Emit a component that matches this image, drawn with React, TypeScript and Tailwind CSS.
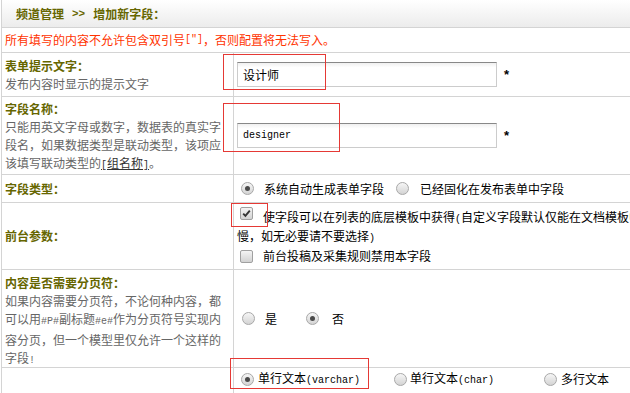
import React from "react";

const Radio = ({ checked }: { checked?: boolean }) => (
  <span className="flex items-center justify-center w-[13px] h-[13px] rounded-full border border-[#a8a8a8] bg-gradient-to-b from-[#f6f6f6] to-[#d4d4d4] shrink-0">
    {checked && <span className="w-[5px] h-[5px] rounded-full bg-[#4a4a4a]" />}
  </span>
);

const Check = ({ checked }: { checked?: boolean }) => (
  <span className="flex items-center justify-center w-[13px] h-[13px] rounded-[2px] border border-[#a0a0a0] bg-gradient-to-b from-[#f4f4f4] to-[#d2d2d2] shrink-0">
    {checked && (
      <svg width="9" height="9" viewBox="0 0 9 9">
        <path d="M1.2 4.6 L3.4 6.9 L7.8 1.6" stroke="#333" strokeWidth="1.9" fill="none" />
      </svg>
    )}
  </span>
);

const M = ({ children }: { children: React.ReactNode }) => (
  <span className="font-['Liberation_Mono',monospace] text-[10px]">{children}</span>
);

const Label = ({ children }: { children: React.ReactNode }) => (
  <div className="font-bold text-[#666600]">{children}</div>
);

const Input = ({ value, mono }: { value: string; mono?: boolean }) => (
  <div className="flex items-center w-[260px] h-[25px] border border-[#cccccc] border-t-[#888888] bg-gradient-to-b from-[#f0f0f0] to-white to-[20%] pl-[5px]">
    <span className={mono ? "font-['Liberation_Mono',monospace] text-[10px]" : "text-[12px]"}>{value}</span>
  </div>
);

export default function App() {
  const line = "border-[#d4d4d4]";
  return (
    <div className="relative w-[630px] h-[393px] overflow-hidden bg-white text-[12px] leading-[18px] text-black font-['Noto_Sans_CJK_SC',sans-serif]">
      <div className={`ml-px w-[900px] border-l ${line}`}>
        {/* header */}
        <div className={`h-[28px] border-b ${line} bg-gradient-to-b from-white to-[#ececec] flex items-center pl-[14px] font-bold text-[#666600]`}>
          <span>频道管理</span>
          <span className="font-['Liberation_Mono',monospace] text-[11px] mx-[8px]">&gt;&gt;</span>
          <span>增加新字段：</span>
        </div>
        {/* notice */}
        <div className={`h-[25px] border-b ${line} flex items-center pl-[3px] text-[#ff3300]`}>
          所有填写的内容不允许包含双引号<M>[&quot;]</M>，否则配置将无法写入。
        </div>
        {/* row 1 */}
        <div className={`flex h-[44px] border-b ${line}`}>
          <div className={`w-[232px] shrink-0 border-r ${line} pl-[3px] pt-[4px]`}>
            <Label>表单提示文字：</Label>
            <div className="text-[#666666]">发布内容时显示的提示文字</div>
          </div>
          <div className="flex items-center pl-[3px]">
            <Input value="设计师" />
            <span className="ml-[7px] font-['Liberation_Sans',sans-serif] font-bold text-[13px]">*</span>
          </div>
        </div>
        {/* row 2 */}
        <div className={`flex h-[78px] border-b ${line}`}>
          <div className={`w-[232px] shrink-0 border-r ${line} pl-[3px] pt-[3px]`}>
            <Label>字段名称：</Label>
            <div className="text-[#666666]">
              只能用英文字母或数字，数据表的真实字
              <br />
              段名，如果数据类型是联动类型，该项应
              <br />
              该填写联动类型的
              <span className="underline text-[#333333]">
                <M>[</M>组名称<M>]</M>
              </span>
              。
            </div>
          </div>
          <div className="flex items-center pl-[3px]">
            <Input value="designer" mono />
            <span className="ml-[7px] font-['Liberation_Sans',sans-serif] font-bold text-[13px]">*</span>
          </div>
        </div>
        {/* row 3 */}
        <div className={`flex h-[28px] border-b ${line}`}>
          <div className={`w-[232px] shrink-0 border-r ${line} pl-[3px] flex items-center`}>
            <Label>字段类型：</Label>
          </div>
          <div className="flex items-center pl-[7px]">
            <Radio checked />
            <span className="ml-[10px]">系统自动生成表单字段</span>
            <span className="ml-[12px]">
              <Radio />
            </span>
            <span className="ml-[11px]">已经固化在发布表单中字段</span>
          </div>
        </div>
        {/* row 4 */}
        <div className={`flex h-[67px] border-b ${line}`}>
          <div className={`w-[232px] shrink-0 border-r ${line} pl-[3px] flex items-center`}>
            <Label>前台参数：</Label>
          </div>
          <div className="pl-[3px] pt-[4px] whitespace-nowrap">
            <div className="flex items-start h-[20px]">
              <span className="ml-[3px] mt-0">
                <Check checked />
              </span>
              <span className="ml-[10px] leading-[20px]">
                使字段可以在列表的底层模板中获得<M>(</M>自定义字段默认仅能在文档模板中获得，选择此项会使列表速度变
              </span>
            </div>
            <div className="leading-[18px]">
              慢，如无必要请不要选择<M>)</M>
            </div>
            <div className="flex items-center h-[16px]">
              <span className="ml-[3px]">
                <Check />
              </span>
              <span className="ml-[10px]">前台投稿及采集规则禁用本字段</span>
            </div>
          </div>
        </div>
        {/* row 5 */}
        <div className={`flex h-[98px] border-b ${line}`}>
          <div className={`w-[232px] shrink-0 border-r ${line} pl-[3px] pt-[4px]`}>
            <Label>内容是否需要分页符：</Label>
            <div className="text-[#666666]">
              如果内容需要分页符，不论何种内容，都
              <br />
              可以用<M>#P#</M>副标题<M>#e#</M>作为分页符号实现内
              <br />
              容分页，但一个模型里仅允许一个这样的
              <br />
              字段<M>!</M>
            </div>
          </div>
          <div className="flex items-center pl-[8px]">
            <Radio />
            <span className="ml-[10px]">是</span>
            <span className="ml-[29px]">
              <Radio checked />
            </span>
            <span className="ml-[13px]">否</span>
          </div>
        </div>
        {/* row 6 */}
        <div className="flex h-[40px]">
          <div className={`w-[232px] shrink-0 border-r ${line}`} />
          <div className="flex items-start pl-[7px]">
            <div className="flex items-center h-[22px]">
              <Radio checked />
              <span className="ml-[4px]">
                单行文本<M>(varchar)</M>
              </span>
              <span className="ml-[34px]">
                <Radio />
              </span>
              <span className="ml-[3px]">
                单行文本<M>(char)</M>
              </span>
              <span className="ml-[50px]">
                <Radio />
              </span>
              <span className="ml-[4px]">多行文本</span>
            </div>
          </div>
        </div>
      </div>

      {/* red annotation boxes */}
      <div className="absolute left-[223px] top-[54px] w-[103px] h-[36px] border border-[#e53935]" />
      <div className="absolute left-[223px] top-[103px] w-[117px] h-[49px] border border-[#e53935]" />
      <div className="absolute left-[231px] top-[203px] w-[37px] h-[24px] border border-[#e53935]" />
      <div className="absolute left-[230px] top-[358px] w-[139px] h-[31px] border border-[#e53935]" />
    </div>
  );
}
